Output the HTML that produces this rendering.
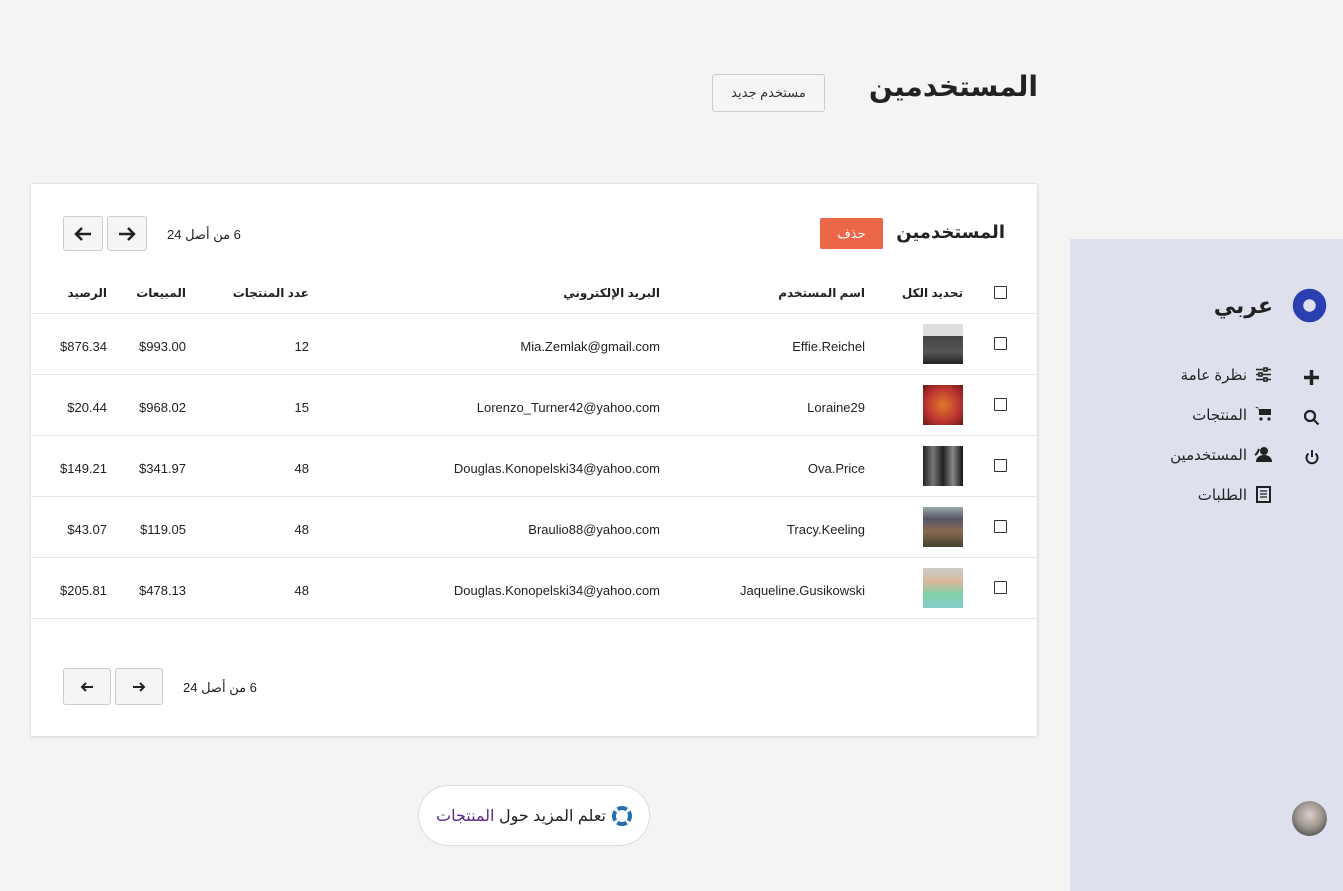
<!DOCTYPE html>
<html dir="ltr"><head><meta charset="utf-8"><style>
*{margin:0;padding:0;box-sizing:border-box}
body{width:1343px;height:891px;background:#f4f4f4;font-family:"Liberation Sans","DejaVu Sans",sans-serif;color:#222;position:relative;overflow:hidden;font-size:13px}
.a{position:absolute}
.r{text-align:right;white-space:nowrap;direction:rtl}
.card{left:30px;top:183px;width:1008px;height:554px;background:#fff;border:1px solid #e2e2e2;border-radius:3px;box-shadow:0 1px 2px rgba(0,0,0,.08)}
.btn{background:#f5f5f5;border:1px solid #ccc;border-radius:3px;display:flex;align-items:center;justify-content:center}
.cb{width:13px;height:13px;border:1.5px solid #333;border-radius:1px;background:#fff}
.line{left:0;width:1008px;height:1px;background:#e8e8e8}
.av{width:40px;height:40px}
.side{left:1070px;top:239px;width:273px;height:652px;background:#dfe0ee}
.h{font-weight:bold;font-size:12px}
</style></head><body>
<div class="a r" style="right:305px;top:70px;font-size:28px;font-weight:bold;color:#222">المستخدمين</div>
<div class="a btn" style="left:712px;top:74px;width:113px;height:38px;font-size:13px;color:#333" dir="rtl">مستخدم جديد</div>

<div class="a card">
  <div class="a r" style="right:32px;top:38px;font-size:18px;font-weight:bold">المستخدمين</div>
  <div class="a" style="left:789px;top:34px;width:63px;height:31px;background:#ec6748;color:#fff;border-radius:2px;display:flex;align-items:center;justify-content:center;font-size:13px">حذف</div>
  <div class="a btn" style="left:32px;top:32px;width:40px;height:35px"><svg width="20" height="16" viewBox="0 0 20 16"><path d="M18 8H3M9 2L3 8l6 6" stroke="#222" stroke-width="2.5" fill="none"/></svg></div>
  <div class="a btn" style="left:76px;top:32px;width:40px;height:35px"><svg width="20" height="16" viewBox="0 0 20 16"><path d="M2 8h15M11 2l6 6-6 6" stroke="#222" stroke-width="2.5" fill="none"/></svg></div>
  <div class="a" style="left:136px;top:43px;font-size:13px" dir="rtl">6 من أصل 24</div>

  <div class="a cb" style="left:963px;top:102px"></div>
  <div class="a r h" style="right:74px;top:102px">تحديد الكل</div>
  <div class="a r h" style="right:172px;top:102px">اسم المستخدم</div>
  <div class="a r h" style="right:377px;top:102px">البريد الإلكتروني</div>
  <div class="a r h" style="right:728px;top:102px">عدد المنتجات</div>
  <div class="a r h" style="right:851px;top:102px">المبيعات</div>
  <div class="a r h" style="right:930px;top:102px">الرصيد</div>
  <div class="a line" style="top:129px"></div>

  <div class="a cb" style="left:963px;top:153px"></div>
  <div class="a av" style="left:892px;top:140px;background:linear-gradient(#ddd 0,#ddd 30%,#444 30%,#555 70%,#222 100%)"></div>
  <div class="a r" style="right:172px;top:155px">Effie.Reichel</div>
  <div class="a r" style="right:377px;top:155px">Mia.Zemlak@gmail.com</div>
  <div class="a r" style="right:728px;top:155px">12</div>
  <div class="a r" style="right:851px;top:155px">$993.00</div>
  <div class="a r" style="right:930px;top:155px">$876.34</div>
  <div class="a line" style="top:190px"></div>

  <div class="a cb" style="left:963px;top:214px"></div>
  <div class="a av" style="left:892px;top:201px;background:radial-gradient(#e07a2a,#b33 60%,#6a1a10)"></div>
  <div class="a r" style="right:172px;top:216px">Loraine29</div>
  <div class="a r" style="right:377px;top:216px">Lorenzo_Turner42@yahoo.com</div>
  <div class="a r" style="right:728px;top:216px">15</div>
  <div class="a r" style="right:851px;top:216px">$968.02</div>
  <div class="a r" style="right:930px;top:216px">$20.44</div>
  <div class="a line" style="top:251px"></div>

  <div class="a cb" style="left:963px;top:275px"></div>
  <div class="a av" style="left:892px;top:262px;background:linear-gradient(90deg,#222,#777,#222,#888,#111)"></div>
  <div class="a r" style="right:172px;top:277px">Ova.Price</div>
  <div class="a r" style="right:377px;top:277px">Douglas.Konopelski34@yahoo.com</div>
  <div class="a r" style="right:728px;top:277px">48</div>
  <div class="a r" style="right:851px;top:277px">$341.97</div>
  <div class="a r" style="right:930px;top:277px">$149.21</div>
  <div class="a line" style="top:312px"></div>

  <div class="a cb" style="left:963px;top:336px"></div>
  <div class="a av" style="left:892px;top:323px;background:linear-gradient(#9aa 0,#556 30%,#8a6a50 60%,#443 100%)"></div>
  <div class="a r" style="right:172px;top:338px">Tracy.Keeling</div>
  <div class="a r" style="right:377px;top:338px">Braulio88@yahoo.com</div>
  <div class="a r" style="right:728px;top:338px">48</div>
  <div class="a r" style="right:851px;top:338px">$119.05</div>
  <div class="a r" style="right:930px;top:338px">$43.07</div>
  <div class="a line" style="top:373px"></div>

  <div class="a cb" style="left:963px;top:397px"></div>
  <div class="a av" style="left:892px;top:384px;background:linear-gradient(#ccc 0,#d9b89a 35%,#7fd0a8 65%,#8cc 100%)"></div>
  <div class="a r" style="right:172px;top:399px">Jaqueline.Gusikowski</div>
  <div class="a r" style="right:377px;top:399px">Douglas.Konopelski34@yahoo.com</div>
  <div class="a r" style="right:728px;top:399px">48</div>
  <div class="a r" style="right:851px;top:399px">$478.13</div>
  <div class="a r" style="right:930px;top:399px">$205.81</div>
  <div class="a line" style="top:434px"></div>

  <div class="a btn" style="left:32px;top:484px;width:48px;height:37px"><svg width="14" height="12" viewBox="0 0 14 12"><path d="M13 6H2M6 2L2 6l4 4" stroke="#222" stroke-width="2" fill="none"/></svg></div>
  <div class="a btn" style="left:84px;top:484px;width:48px;height:37px"><svg width="14" height="12" viewBox="0 0 14 12"><path d="M1 6h11M8 2l4 4-4 4" stroke="#222" stroke-width="2" fill="none"/></svg></div>
  <div class="a" style="left:152px;top:496px" dir="rtl">6 من أصل 24</div>
</div>

<div class="a" style="left:418px;top:785px;width:232px;height:61px;background:#fff;border:1px solid #ddd;border-radius:31px;display:flex;align-items:center;justify-content:center;gap:6px;font-size:16px">
  <span dir="rtl"><span style="color:#222">تعلم المزيد حول </span><span style="color:#5a2b8a">المنتجات</span></span>
  <svg width="20" height="20" viewBox="0 0 20 20"><circle cx="10" cy="10" r="8" fill="none" stroke="#2b6cb0" stroke-width="4"/><circle cx="10" cy="10" r="8" fill="none" stroke="#fff" stroke-width="4" stroke-dasharray="3 9.57" stroke-dashoffset="1.5" transform="rotate(45 10 10)"/></svg>
</div>

<div class="a side">
  <svg class="a" style="left:222px;top:49px" width="35" height="35" viewBox="0 0 35 35"><circle cx="17.5" cy="17.5" r="11.5" fill="none" stroke="#2c3fb0" stroke-width="10.5"/></svg>
  <div class="a r" style="right:70px;top:54px;font-size:22px;font-weight:bold">عربي</div>
  <div class="a r" style="right:96px;top:127px;font-size:15px">نظرة عامة</div>
  <div class="a r" style="right:96px;top:167px;font-size:15px">المنتجات</div>
  <div class="a r" style="right:96px;top:207px;font-size:15px">المستخدمين</div>
  <div class="a r" style="right:96px;top:247px;font-size:15px">الطلبات</div>
  <svg class="a" style="left:185px;top:128px" width="17" height="15" viewBox="0 0 17 15" stroke="#222" stroke-width="1.6" fill="none"><path d="M1 2.5h15M1 7.5h15M1 12.5h15"/><rect x="9" y="1" width="3" height="3" fill="#dfe0ee"/><rect x="4" y="6" width="3" height="3" fill="#dfe0ee"/><rect x="9" y="11" width="3" height="3" fill="#dfe0ee"/></svg>
  <svg class="a" style="left:185px;top:167px" width="17" height="16" viewBox="0 0 17 16"><path d="M0 1h3l2 8h10l1-6H4" fill="#222"/><rect x="4" y="3" width="12" height="6" fill="#222"/><circle cx="6" cy="13" r="1.6" fill="#222"/><circle cx="14" cy="13" r="1.6" fill="#222"/></svg>
  <svg class="a" style="left:184px;top:207px" width="18" height="16" viewBox="0 0 18 16"><circle cx="10" cy="5" r="4" fill="#222"/><path d="M2 16c0-5 4-7 8-7s8 2 8 7z" fill="#222"/><path d="M1 9c2-1 3-3 4-6" stroke="#222" stroke-width="2" fill="none"/></svg>
  <svg class="a" style="left:186px;top:247px" width="15" height="17" viewBox="0 0 15 17" fill="none" stroke="#222"><rect x="1" y="1" width="13" height="15" stroke-width="2"/><path d="M4 5h7M4 8h7M4 11h7" stroke-width="1.3"/></svg>
  <svg class="a" style="left:233px;top:130px" width="17" height="17" viewBox="0 0 17 17"><path d="M8.5 1v15M1 8.5h15" stroke="#222" stroke-width="3.5"/></svg>
  <svg class="a" style="left:233px;top:170px" width="17" height="17" viewBox="0 0 17 17" fill="none" stroke="#222" stroke-width="2.2"><circle cx="7" cy="7" r="5"/><path d="M10.5 10.5L15.5 15.5"/></svg>
  <svg class="a" style="left:234px;top:210px" width="16" height="17" viewBox="0 0 16 17" fill="none" stroke="#222" stroke-width="2"><path d="M8 1v7"/><path d="M4.5 4.5a5.5 5.5 0 1 0 7 0"/></svg>
  <div class="a" style="left:222px;top:562px;width:35px;height:35px;border-radius:50%;background:radial-gradient(circle at 50% 40%,#d8d0c8 0,#a09890 45%,#555 80%)"></div>
</div>
</body></html>
